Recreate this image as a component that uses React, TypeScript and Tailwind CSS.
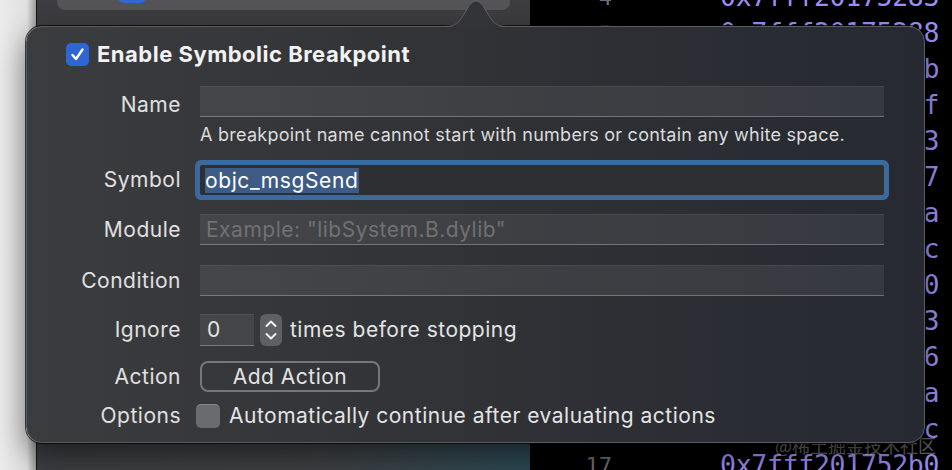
import React from "react";

const rows: [string, string][] = [
  ["4", "0x7fff20175283"],
  ["5", "0x7fff20175288"],
  ["6", "0x7fff2017528b"],
  ["7", "0x7fff2017528f"],
  ["8", "0x7fff20175293"],
  ["9", "0x7fff20175297"],
  ["10", "0x7fff2017529a"],
  ["11", "0x7fff2017529c"],
  ["12", "0x7fff201752a0"],
  ["13", "0x7fff201752a3"],
  ["14", "0x7fff201752a6"],
  ["15", "0x7fff201752aa"],
  ["16", "0x7fff201752ac"],
  ["17", "0x7fff201752b0"],
];

function Row({
  label,
  children,
  className = "",
  labelClass = "",
}: {
  label: string;
  children: React.ReactNode;
  className?: string;
  labelClass?: string;
}) {
  return (
    <div className={`flex items-center ${className}`}>
      <div
        className={`w-[154px] shrink-0 text-right text-[21px] leading-[24px] tracking-[0.5px] text-[#e0e0e0] ${labelClass}`}
      >
        {label}
      </div>
      <div className="ml-[19px] flex h-full w-[684px] items-center">
        {children}
      </div>
    </div>
  );
}

function TextField({ children }: { children?: React.ReactNode }) {
  return (
    <div className="flex h-full w-full items-center border-t border-b border-t-white/[0.06] border-b-white/[0.28] bg-white/[0.07] pl-[6px] text-[21px] tracking-[0.5px]">
      {children}
    </div>
  );
}

export default function App() {
  return (
    <div className="relative flex h-[470px] w-[952px] overflow-hidden bg-black [font-family:Inter,'Noto_Sans',sans-serif]">
      {/* desktop strip */}
      <div className="w-[36px] shrink-0 bg-gradient-to-r from-[#ececec] via-[#e0e0e0] via-75% to-[#9c9c9c]" />

      {/* sidebar window */}
      <div className="flex w-[494px] shrink-0 flex-col border-l border-[#161616] bg-[#3d3d3f]">
        <div className="ml-[20px] mt-[-30px] flex h-[40px] w-[453px] items-end rounded-[8px] bg-[#555557] pb-[7px]">
          <div className="ml-[61px] h-[28px] w-[28px] rounded-[6px] bg-[#2f67d8]" />
          <span className="mb-[6px] ml-[16px] text-[26px] leading-[26px] text-white">my_msg</span>
        </div>
        <div className="flex-1" />
        <div className="h-[30px] bg-gradient-to-r from-[#3d3e40] via-[#3f4042] via-55% to-[#2b4853]" />
      </div>

      {/* disassembly */}
      <div className="flex flex-1 flex-col bg-black">
        <div className="mt-[-21px] flex flex-col">
          {rows.map(([n, addr]) => (
            <div key={n} className="flex h-[36px] items-center">
              <span className="w-[82px] text-right text-[22px] text-[#6e6e70] [font-family:'DejaVu_Sans_Mono',monospace]">
                {n}
              </span>
              <span className="ml-[108px] text-[26.5px] leading-none tracking-[-0.3px] text-[#9d90f5] [font-family:'DejaVu_Sans_Mono',monospace]">
                {addr}
              </span>
            </div>
          ))}
        </div>
      </div>

      {/* watermark */}
      <div className="absolute left-[775px] top-[432px] text-[18px] text-white/40 [font-family:'Noto_Sans_CJK_SC',sans-serif]">
        @稀土掘金技术社区
      </div>

      {/* popover arrow */}
      <svg
        className="absolute left-[445px] top-0 z-20"
        width="62"
        height="28"
        viewBox="0 0 62 28"
      >
        <path
          d="M0 27.5 C10 27.5 14 24 19 15 L25 5 Q31 -2 37 5 L43 15 C48 24 52 27.5 62 27.5 Z"
          fill="#323438"
        />
        <path
          d="M0 26.5 C10 26.5 14 23 19 14 L25 4 Q31 -3 37 4 L43 14 C48 23 52 26.5 62 26.5"
          fill="none"
          stroke="#5c5d61"
          strokeWidth="1"
        />
      </svg>

      {/* popover */}
      <div className="absolute left-[26px] top-[26px] z-10 h-[417px] w-[899px] rounded-[16px] border border-[#5a5b5f] bg-gradient-to-r from-[#3b3c3e] via-[#303236] to-[#262931] pt-[15px] text-[#e4e4e4] shadow-[0_0_0_1px_rgba(0,0,0,0.7),0_12px_30px_rgba(0,0,0,0.5)]">
        {/* title */}
        <div className="flex h-[24px] items-center pl-[39px]">
          <div className="flex h-[23px] w-[23px] items-center justify-center rounded-[5px] bg-[#2f66d6]">
            <svg width="15" height="15" viewBox="0 0 15 15">
              <path
                d="M2.5 8 L6 12 L12.5 2.5"
                fill="none"
                stroke="white"
                strokeWidth="2.4"
                strokeLinecap="round"
                strokeLinejoin="round"
              />
            </svg>
          </div>
          <span className="ml-[8px] text-[22px] font-bold tracking-[0.5px] text-[#f2f2f2]">
            Enable Symbolic Breakpoint
          </span>
        </div>

        <Row label="Name" className="mt-[20px] h-[31px]" labelClass="pt-[7px]">
          <TextField />
        </Row>

        <div className="h-[48px] pl-[173px] pt-[8px] text-[18px] leading-[20px] tracking-[0.25px] text-[#dcdcdc]">
          A breakpoint name cannot start with numbers or contain any white space.
        </div>

        <Row label="Symbol" className="h-[30px]">
          <div className="flex h-full w-full items-center rounded-[2px] bg-[#2d2f33] pl-[5px] text-[21px] tracking-[0.6px] shadow-[0_0_0_5px_#3c6a9c]">
            <span className="bg-[#3d5b84] pr-[1px] leading-[25px] text-white">
              objc_msgSend
            </span>
          </div>
        </Row>

        <Row label="Module" className="mt-[19px] h-[31px]">
          <TextField>
            <span className="text-[#707173]">Example: "libSystem.B.dylib"</span>
          </TextField>
        </Row>

        <Row label="Condition" className="mt-[20px] h-[31px]">
          <TextField />
        </Row>

        <Row label="Ignore" className="mt-[18px] h-[32px]">
          <div className="flex h-full w-[54px] items-center border-t border-b border-t-white/[0.06] border-b-white/[0.28] bg-white/[0.07] pl-[7px] text-[21px]">
            0
          </div>
          <div className="ml-[6px] flex h-[32px] w-[22px] flex-col items-center justify-center rounded-[6px] bg-[#5f6064]">
            <svg width="22" height="32" viewBox="0 0 22 32">
              <path
                d="M6.5 12 L11 7.5 L15.5 12"
                fill="none"
                stroke="#f0f0f0"
                strokeWidth="2"
                strokeLinecap="round"
                strokeLinejoin="round"
              />
              <path
                d="M6.5 20 L11 24.5 L15.5 20"
                fill="none"
                stroke="#f0f0f0"
                strokeWidth="2"
                strokeLinecap="round"
                strokeLinejoin="round"
              />
            </svg>
          </div>
          <span className="ml-[8px] text-[21px] tracking-[0.5px]">times before stopping</span>
        </Row>

        <Row label="Action" className="mt-[15px] h-[31px]">
          <div className="flex h-full w-[180px] items-center justify-center rounded-[8px] border-2 border-[#76777a] text-[21px] tracking-[0.5px]">
            Add Action
          </div>
        </Row>

        <Row label="Options" className="mt-[12px] h-[24px]" labelClass="mr-[-2px]">
          <div className="ml-[-2px] h-[24px] w-[24px] rounded-[5px] border-t border-white/20 bg-[#6a6b6e]" />
          <span className="ml-[9px] text-[21px] tracking-[0.5px]">
            Automatically continue after evaluating actions
          </span>
        </Row>
      </div>
    </div>
  );
}
